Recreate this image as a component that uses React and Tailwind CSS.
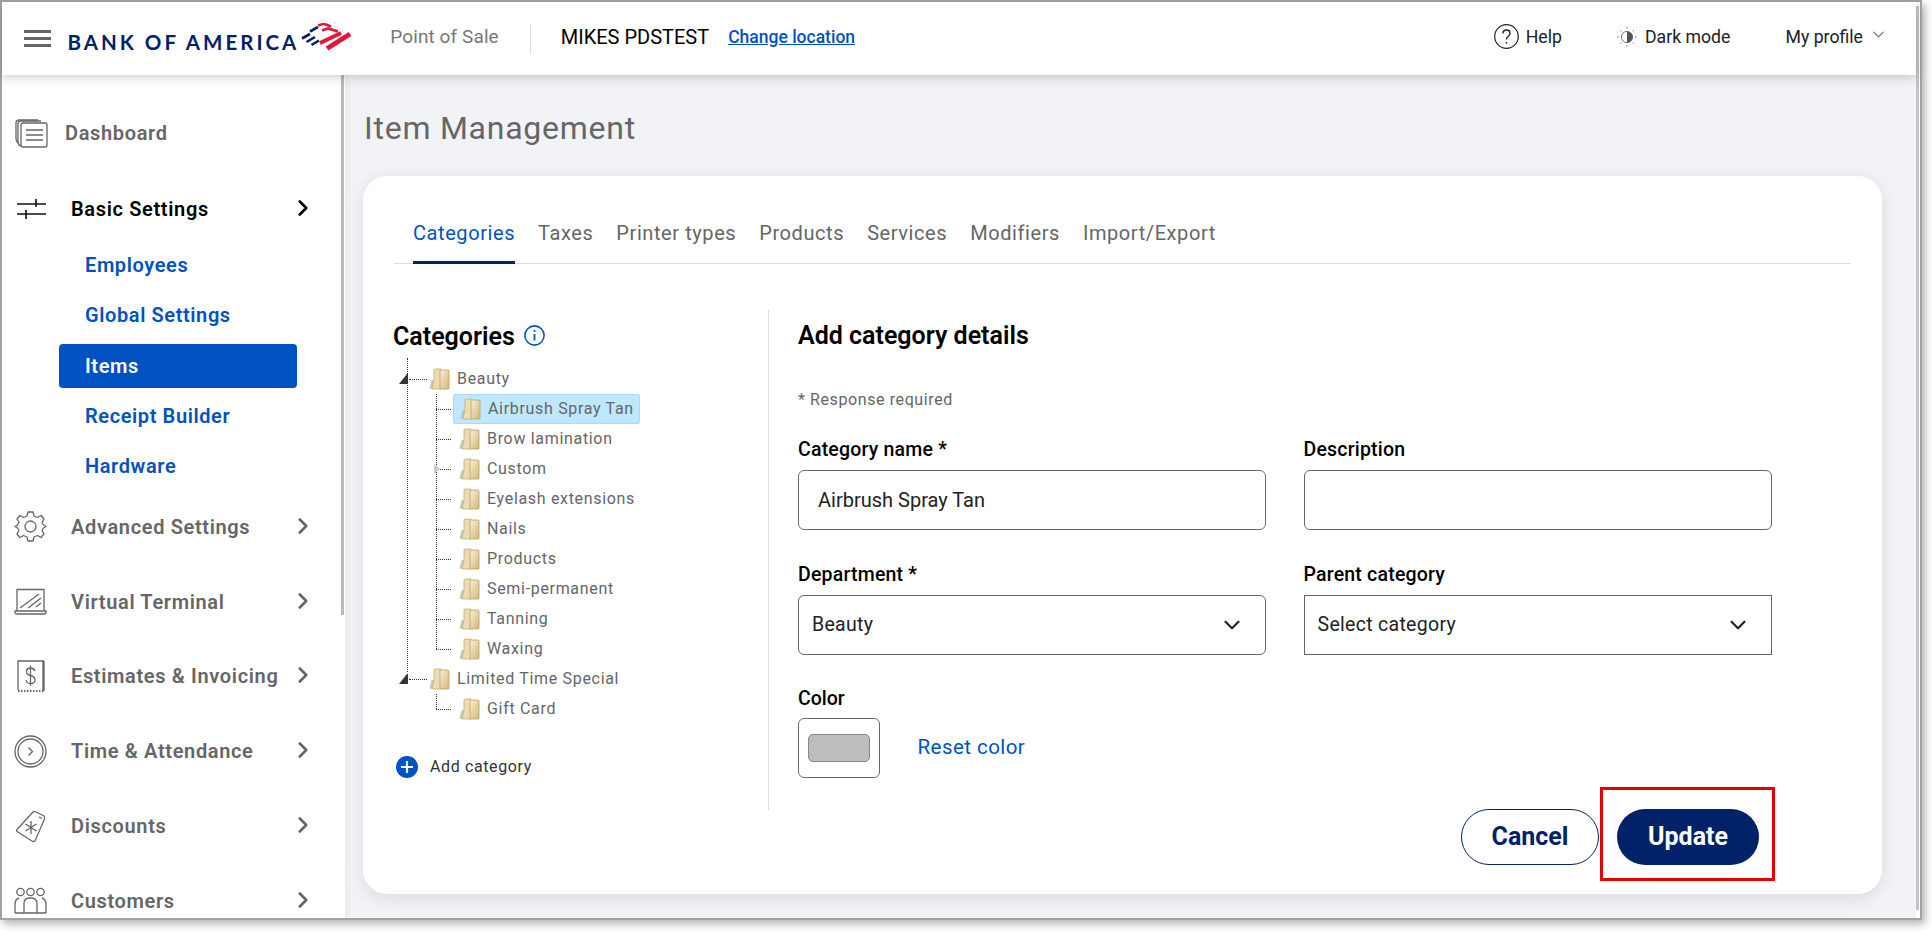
import React from 'react';
import { ChevronRight, ChevronDown } from 'lucide-react';

const roboto = { fontFamily: 'Roboto, "Liberation Sans", sans-serif' };

function Folder() {
  return (
    <svg width="21" height="22" viewBox="0 0 21 22">
      <defs>
        <linearGradient id="fold" x1="0" y1="0" x2="1" y2="1">
          <stop offset="0" stopColor="#f8f0da" />
          <stop offset="1" stopColor="#d4b672" />
        </linearGradient>
      </defs>
      <path d="M0.5 20 L2.5 12 L6 12 L6 21 L2 21 Z" fill="#bdb8a8" opacity="0.75" />
      <path d="M5 2 Q5 1 6 1 L12 1 L12 21 L4 21 Q3 21 3 20 L5 12 Z" fill="#ecdcb4" stroke="#c9ab6c" strokeWidth="0.8" />
      <path d="M11 3 Q11 2 12 2 L19 2 Q20 2 20 3 L20 20 Q20 21 19 21 L11 21 Z" fill="url(#fold)" stroke="#bf9f5c" strokeWidth="0.8" />
    </svg>
  );
}

function Logo() {
  return (
    <svg width="52" height="28" viewBox="0 0 52 28" className="ml-[2px] mb-[4px]" fill="none">
      <g stroke="#012169" strokeWidth="2.6">
        <path d="M1 15.5 L9 11" />
        <path d="M5.5 19 L14 14" />
        <path d="M10.5 22 L18 17.5" />
        <path d="M9 8.5 L17 4" />
      </g>
      <g stroke="#e31837">
        <path d="M17 2.5 L23 0.8 L30 3.5" strokeWidth="2.6" />
        <path d="M21 7.5 L27 5.5 L37 8.5" strokeWidth="2.8" />
        <path d="M19 20 L40 10" strokeWidth="4" />
        <path d="M26 25.5 L49 11" strokeWidth="5" />
      </g>
    </svg>
  );
}

function NavIcon({ name, dark }) {
  const c = dark ? '#111' : '#666';
  const p = { fill: 'none', stroke: c, strokeWidth: 1.3 };
  if (name === 'dash')
    return (
      <svg width="33" height="30" viewBox="0 0 33 30" {...p}>
        <path d="M23 2 H4 Q1 2 1 5 V20 Q1 24 4 25" />
        <path d="M26 3 H6 Q3 3 3 6 V24 Q3 27 6 28" />
        <rect x="6" y="5" width="26" height="24" rx="2" />
        <path d="M11 12 H28 M11 17 H28 M11 22 H28" strokeWidth="1.6" />
      </svg>
    );
  if (name === 'sliders')
    return (
      <svg width="32" height="22" viewBox="0 0 32 22" {...p}>
        <path d="M2 6 H31 M2 16 H31" strokeWidth="1.6" />
        <path d="M21 1 V9 M11 12 V21" strokeWidth="1.6" />
      </svg>
    );
  if (name === 'gear')
    return (
      <svg width="33" height="33" viewBox="0 0 33 33" {...p}>
        <circle cx="16.5" cy="16.5" r="5.5" />
        <path d="M14 2 L19 2 L20 6 L23.5 7.5 L27 5.5 L30 9 L28 12.5 L29.5 15 L32 16.5 L29.5 18 L28 20.5 L30 24 L27 27.5 L23.5 25.5 L20 27 L19 31 L14 31 L13 27 L9.5 25.5 L6 27.5 L3 24 L5 20.5 L3.5 18 L1 16.5 L3.5 15 L5 12.5 L3 9 L6 5.5 L9.5 7.5 L13 6 Z" strokeLinejoin="round" />
      </svg>
    );
  if (name === 'laptop')
    return (
      <svg width="33" height="27" viewBox="0 0 33 27" {...p}>
        <path d="M3 23 V1.5 H30 V23" />
        <path d="M1 23 H32 V24 Q32 26 30 26 H3 Q1 26 1 24 Z" />
        <path d="M6 20 L25 6 M14 20 L27 10 M22 19 L27 15" />
      </svg>
    );
  if (name === 'receipt')
    return (
      <svg width="28" height="33" viewBox="0 0 28 33" {...p}>
        <path d="M1 30 V1 H26.5 V31" />
        <path d="M26.5 1 V31" strokeWidth="2.2" />
        <path d="M1 31 H27" strokeDasharray="1.5 1.5" strokeWidth="2" />
        <path d="M18 11 Q17 8 13.5 8 Q9.5 8 9.5 11.5 Q9.5 14.5 13.5 15.5 Q18 16.5 18 20 Q18 23.5 13.5 23.5 Q9.5 23.5 9 20 M13.5 5.5 V26" />
      </svg>
    );
  if (name === 'clock')
    return (
      <svg width="33" height="33" viewBox="0 0 33 33" {...p}>
        <circle cx="16.5" cy="16.5" r="15.5" />
        <circle cx="16.5" cy="16.5" r="12.5" />
        <path d="M14.5 12.5 L18.5 16.5 L14.5 20.5" />
      </svg>
    );
  if (name === 'tag')
    return (
      <svg width="31" height="33" viewBox="0 0 31 33" {...p}>
        <path d="M20 1.5 L29 6 Q30 7 29.5 9 L20 31 Q19 32 17 31 L2 21.5 Q1 20.5 2 19.5 L18 2 Q19 1 20 1.5 Z" />
        <path d="M15 11 V24 M9.5 14 L20.5 21 M9.5 21 L20.5 14" transform="translate(1 0)" />
        <path d="M24 7 L27 8.5" />
      </svg>
    );
  return (
    <svg width="33" height="27" viewBox="0 0 33 27" {...p}>
      <circle cx="6.5" cy="5" r="3.7" />
      <circle cx="16.5" cy="5" r="3.7" />
      <circle cx="26.5" cy="5" r="3.7" />
      <path d="M1 26 V18 Q1 12 5 11 M32 26 V18 Q32 12 28 11" />
      <path d="M10 26 V16 Q10 11 16.5 11 Q23 11 23 16 V26 Z" />
      <path d="M1 26 H10 M23 26 H32" />
    </svg>
  );
}

function NavRow({ icon, label, active, h = 'h-[74.8px]' }) {
  return (
    <div className={`flex items-center ${h} pl-[12px] relative`}>
      <div className="w-[33px] flex justify-center">
        <NavIcon name={icon} dark={active} />
      </div>
      <span className={`ml-[24px] text-[20px] font-semibold tracking-[0.65px] ${active ? 'text-black' : 'text-[#666]'}`}>{label}</span>
      <ChevronRight className={`absolute left-[288px] -translate-y-[1px] ${active ? 'text-black' : 'text-[#666]'}`} size={26} strokeWidth={2.4} />
    </div>
  );
}

function SubRow({ label, active }) {
  return (
    <div className={`h-[44px] mb-[6px] ml-[57px] w-[238px] rounded-[4px] pl-[26px] flex items-center text-[20px] font-semibold tracking-[0.6px] ${active ? 'bg-[#0052c2] text-white' : 'text-[#0052c2]'}`}>
      {label}
    </div>
  );
}

function Sidebar() {
  return (
    <div className="w-[339px] shrink-0 bg-white overflow-hidden">
      <div className="h-[38px]" />
      <div className="flex items-center h-[40px] pl-[13px] mb-[35.5px]">
        <div className="w-[33px] flex justify-center"><NavIcon name="dash" /></div>
        <span className="ml-[17px] text-[20px] font-semibold tracking-[0.65px] text-[#666]">Dashboard</span>
      </div>
      <div className="h-[40px] mb-[14px]">
        <NavRow icon="sliders" label="Basic Settings" active h="h-[40px]" />
      </div>
      <SubRow label="Employees" />
      <div className="h-[44px] mb-[7px] ml-[57px] pl-[26px] flex items-center text-[20px] font-semibold tracking-[0.6px] text-[#0052c2]">Global Settings</div>
      <SubRow label="Items" active />
      <SubRow label="Receipt Builder" />
      <SubRow label="Hardware" />
      <div className="mt-[-4px]">
        <NavRow icon="gear" label="Advanced Settings" />
        <NavRow icon="laptop" label="Virtual Terminal" />
        <NavRow icon="receipt" label="Estimates & Invoicing" />
        <NavRow icon="clock" label="Time & Attendance" />
        <NavRow icon="tag" label="Discounts" />
        <NavRow icon="people" label="Customers" />
      </div>
    </div>
  );
}

function Header() {
  return (
    <div className="relative z-10 h-[73px] shrink-0 bg-white shadow-[0_3px_10px_rgba(0,0,0,0.18)] flex items-center pl-[22px]">
      <div className="w-[27px] flex flex-col gap-[4px]">
        <div className="h-[3px] bg-[#666]" />
        <div className="h-[3px] bg-[#666]" />
        <div className="h-[3px] bg-[#666]" />
      </div>
      <span className="ml-[16.5px] mt-[8px] text-[#012169] text-[20.5px] font-bold tracking-[3px] whitespace-nowrap" style={{ fontFamily: 'Lato, sans-serif' }}>BANK OF AMERICA</span>
      <Logo />
      <span className="ml-[37px] mb-[3px] text-[19px] text-[#777] tracking-[0.1px]">Point of Sale</span>
      <div className="ml-[31px] w-px h-[30px] bg-[#ddd]" />
      <span className="ml-[30px] mb-[3px] text-[20px] text-black">MIKES PDSTEST</span>
      <span className="ml-[19px] mb-[3px] text-[17.5px] font-medium text-[#0052c2] underline">Change location</span>
      <div className="ml-auto mb-[3px] flex items-center text-[17.7px] text-[#222]">
        <svg width="25" height="25" viewBox="0 0 25 25" fill="none" stroke="#222" strokeWidth="1.2">
          <circle cx="12.5" cy="12.5" r="11.8" />
          <path d="M9 9.5 Q9 6 12.5 6 Q16 6 16 9.3 Q16 11.3 14 12.5 Q12.5 13.6 12.5 15.5" strokeWidth="1.4" />
          <circle cx="12.5" cy="18.8" r="0.9" fill="#222" stroke="none" />
        </svg>
        <span className="ml-[7px]">Help</span>
        <svg className="ml-[55px]" width="20" height="20" viewBox="0 0 20 20" fill="none" stroke="#777" strokeWidth="1">
          <circle cx="10" cy="10" r="5.6" />
          <path d="M10 4.4 A5.6 5.6 0 0 1 10 15.6 Z" fill="#555" stroke="none" />
          <path d="M10 0 V2 M10 18 V20 M0 10 H2 M18 10 H20 M3 3 L4.4 4.4 M17 3 L15.6 4.4 M3 17 L4.4 15.6 M17 17 L15.6 15.6" strokeDasharray="1 0.5" />
        </svg>
        <span className="ml-[8px]">Dark mode</span>
        <span className="ml-[55px]">My profile</span>
        <ChevronDown className="ml-[6px] mb-[4px] mr-[28px] text-[#666]" size={19} strokeWidth={1.3} />
      </div>
    </div>
  );
}

const tabs = ['Categories', 'Taxes', 'Printer types', 'Products', 'Services', 'Modifiers', 'Import/Export'];
const children = ['Airbrush Spray Tan', 'Brow lamination', 'Custom', 'Eyelash extensions', 'Nails', 'Products', 'Semi-permanent', 'Tanning', 'Waxing'];

function TreeRow({ label, selected }) {
  return (
    <div className="relative h-[30px] flex items-center pl-[59px]">
      {/* connector */}
      <div className="absolute left-[42px] top-[15px] w-[15px] border-t border-dotted border-[#333]" />
      {label === 'Custom' && (
        <div className="absolute left-[40px] top-[10px] w-0 h-0 border-y-[5px] border-y-transparent border-l-[6px] border-l-[#ccc]" />
      )}
      <div className={`flex items-center h-[30px] pl-[6px] pr-[5px] ${selected ? 'bg-[#bde8fd] border border-[#a8dcf5] rounded-[2px]' : ''}`}>
        <Folder />
        <span className="ml-[7px] text-[16px] tracking-[0.68px] text-[#666] whitespace-nowrap">{label}</span>
      </div>
    </div>
  );
}

function RootRow({ label }) {
  return (
    <div className="relative h-[30px] flex items-center pl-[35px]">
      <div className="absolute left-[5px] top-[10px] w-0 h-0 border-b-[10px] border-b-[#333] border-l-[8px] border-l-transparent border-r-[1px] border-r-[#333]" />
      <div className="absolute left-[15px] top-[15px] w-[18px] border-t border-dotted border-[#333]" />
      <Folder />
      <span className="ml-[7px] text-[16px] tracking-[0.68px] text-[#666] whitespace-nowrap">{label}</span>
    </div>
  );
}

function Tree() {
  return (
    <div className="relative mt-[5px]">
      {/* root and child guide lines */}
      <div className="absolute left-[13px] top-[-6px] h-[314px] border-l border-dotted border-[#333]" />
      <div className="absolute left-[42px] top-[30px] h-[255px] border-l border-dotted border-[#333]" />
      <div className="absolute left-[42px] top-[330px] h-[15px] border-l border-dotted border-[#333]" />
      <RootRow label="Beauty" />
      {children.map((c, i) => <TreeRow key={c} label={c} selected={i === 0} />)}
      <RootRow label="Limited Time Special" />
      <TreeRow label="Gift Card" />
    </div>
  );
}

function Field({ label, children }) {
  return (
    <div>
      <div className="text-[19.5px] font-medium text-black leading-[22px] tracking-[0.2px] mb-[9px]">{label}</div>
      {children}
    </div>
  );
}

function Select({ value, square }) {
  return (
    <div className={`h-[60px] border border-[#666] flex items-center pl-[13px] pr-[20px] text-[19.5px] text-[#222] tracking-[0.3px] ${square ? '' : 'rounded-[6px]'}`}>
      <span>{value}</span>
      <ChevronDown className="ml-auto text-[#222]" size={26} strokeWidth={2} />
    </div>
  );
}

function Card() {
  return (
    <div className="mt-[27.5px] ml-[18px] mr-[34px] h-[718px] rounded-[24px] bg-white shadow-[0_4px_18px_rgba(0,0,0,0.1)] pt-[26px] px-[31px] relative">
      <div className="flex gap-[23px] border-b border-[#ddd] h-[62px] pl-[19px] text-[20px] tracking-[0.58px] text-[#666]">
        {tabs.map((t, i) => (
          <div key={t} className={`h-[62px] flex items-center ${i === 0 ? 'text-[#0052c2] border-b-[3px] border-[#012169] pt-[3px]' : ''}`}>{t}</div>
        ))}
      </div>
      <div className="flex mt-[46.5px]">
        <div className="w-[375px] h-[500px] border-r border-[#ddd] shrink-0">
          <div className="flex items-center h-[44px] mt-[5px] -ml-[1px]">
            <span className="text-[25px] font-semibold text-black">Categories</span>
            <svg className="ml-[9px] mb-[4px]" width="21" height="21" viewBox="0 0 21 21" fill="none" stroke="#0052c2" strokeWidth="1.6">
              <circle cx="10.5" cy="10.5" r="9.6" />
              <path d="M10.5 9 V15.5" strokeWidth="1.8" />
              <circle cx="10.5" cy="6" r="1.1" fill="#0052c2" stroke="none" />
            </svg>
          </div>
          <Tree />
          <div className="flex items-center mt-[31px] ml-[2px]">
            <div className="w-[22px] h-[22px] rounded-full bg-[#0052c2] flex items-center justify-center">
              <svg width="12" height="12" viewBox="0 0 12 12" stroke="#fff" strokeWidth="2.2"><path d="M6 0 V12 M0 6 H12" /></svg>
            </div>
            <span className="ml-[12px] text-[16px] tracking-[0.62px] text-[#333]">Add category</span>
          </div>
        </div>
        <div className="ml-[29px] flex-1">
          <div className="mt-[7.5px] text-[25px] font-semibold text-black leading-[36px]">Add category details</div>
          <div className="mt-[35px] text-[16px] tracking-[0.6px] text-[#666] leading-[22px]">* Response required</div>
          <div className="mt-[28.5px] grid grid-cols-[468px_468px] gap-x-[37.5px] gap-y-[34px]">
            <Field label="Category name *">
              <div className="h-[60px] border border-[#666] rounded-[6px] flex items-center pl-[19px] text-[20px] text-[#222]">Airbrush Spray Tan</div>
            </Field>
            <Field label="Description">
              <div className="h-[60px] border border-[#666] rounded-[6px]" />
            </Field>
            <Field label="Department *"><Select value="Beauty" /></Field>
            <Field label="Parent category"><Select value="Select category" square /></Field>
          </div>
          <div className="mt-[33px] text-[19.5px] font-medium text-black leading-[22px]">Color</div>
          <div className="mt-[8px] flex items-center">
            <div className="-ml-[0.5px] w-[82px] h-[60px] border border-[#666] rounded-[6px] flex items-center justify-center">
              <div className="w-[62px] h-[28px] rounded-[5px] bg-[#bdbdbd] border border-[#888]" />
            </div>
            <span className="ml-[38px] mb-[2px] text-[20.5px] tracking-[0.45px] text-[#0052c2]">Reset color</span>
          </div>
        </div>
      </div>
      <div className="absolute left-[1098px] top-[633px] flex gap-[18px]">
        <div className="w-[138px] h-[56px] rounded-full border border-[#012169] flex items-center justify-center text-[25px] font-bold text-[#012169]">Cancel</div>
        <div className="w-[142px] h-[56px] rounded-full bg-[#012169] flex items-center justify-center text-[25px] font-bold text-white">Update</div>
      </div>
      <div className="absolute left-[1237px] top-[611px] w-[175px] h-[94px] border-[3px] border-[#e60000] pointer-events-none" />
    </div>
  );
}

export default function App() {
  return (
    <div className="w-[1932px] h-[932px] bg-white overflow-hidden" style={roboto}>
      <div className="w-[1922px] h-[920px] border-2 border-[#a3a3a3] flex flex-col shadow-[3px_4px_8px_rgba(0,0,0,0.3)] bg-white">
        <div className="flex flex-1 min-h-0">
          <div className="flex-1 min-w-0 flex flex-col">
            <Header />
            <div className="flex flex-1 min-h-0">
              <Sidebar />
              <div className="w-[4px] shrink-0 bg-white">
                <div className="w-[3px] h-[540px] bg-[#b9b9b9]" />
              </div>
              <div className="flex-1 min-w-0 bg-[#f2f3f7] shadow-[inset_10px_0_10px_-10px_rgba(0,0,0,0.08)]">
                <div className="pt-[33px] pl-[19px] text-[32px] leading-[40px] tracking-[0.75px] text-[#666]">Item Management</div>
                <Card />
              </div>
            </div>
          </div>
          {/* page scrollbar */}
          <div className="w-[4px] shrink-0 bg-white pt-[4px] pb-[8px]">
            <div className="h-full w-[3px] bg-[#c4c4c4]" />
          </div>
        </div>
      </div>
    </div>
  );
}
